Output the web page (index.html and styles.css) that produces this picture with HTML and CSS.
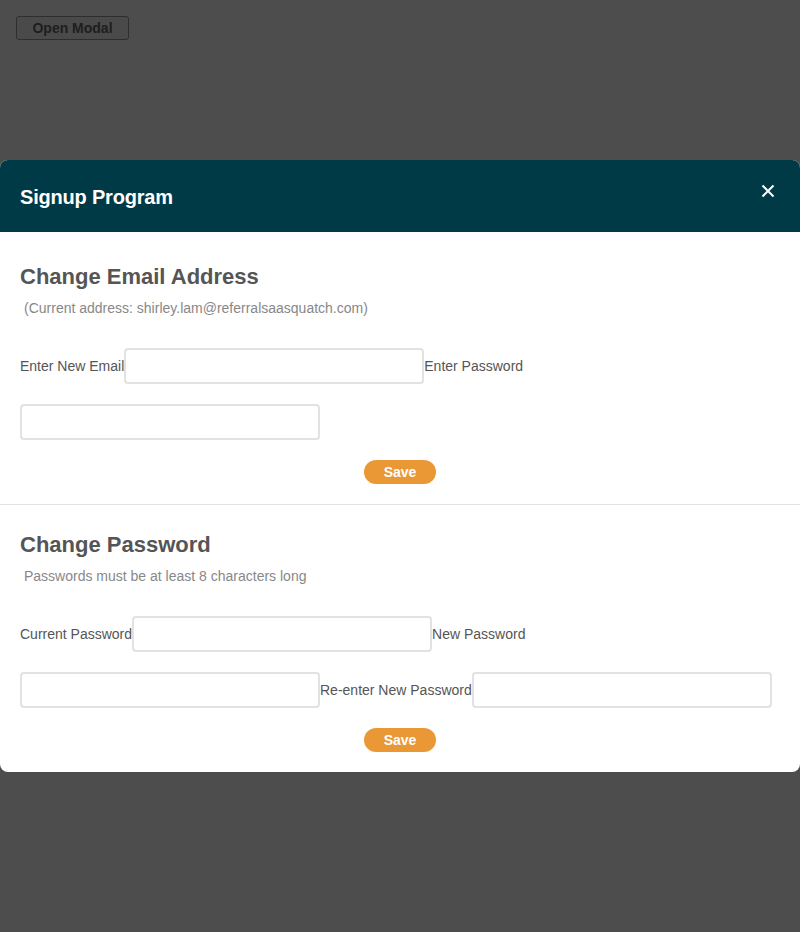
FILE: index.html
```html
<!DOCTYPE html>
<html>
<head>
<meta charset="utf-8">
<link rel="stylesheet" href="styles.css">
</head>
<body>
<div class="page">
  <button class="open-btn">Open Modal</button>
  <div class="modal">
    <div class="modal-header">
      <span class="modal-title">Signup Program</span>
      <svg class="close" width="14" height="14" viewBox="0 0 14 14"><path d="M1.5 1.5 L12.5 12.5 M12.5 1.5 L1.5 12.5" stroke="#fff" stroke-width="2" fill="none"/></svg>
    </div>
    <div class="section first">
      <h2 class="section-title">Change Email Address</h2>
      <p class="section-sub">(Current address: shirley.lam@referralsaasquatch.com)</p>
      <div class="fields">
        <label class="field-label">Enter New Email</label><input class="field-input" type="text">
        <label class="field-label">Enter Password</label><input class="field-input" type="password">
      </div>
      <div class="actions"><button class="save-btn">Save</button></div>
    </div>
    <div class="section second">
      <h2 class="section-title">Change Password</h2>
      <p class="section-sub">Passwords must be at least 8 characters long</p>
      <div class="fields">
        <label class="field-label">Current Password</label><input class="field-input" type="password">
        <label class="field-label">New Password</label><input class="field-input" type="password">
        <label class="field-label">Re-enter New Password</label><input class="field-input" type="password">
      </div>
      <div class="actions"><button class="save-btn">Save</button></div>
    </div>
  </div>
</div>
</body>
</html>
```
FILE: styles.css
```css
html, body {
  margin: 0;
  padding: 0;
  background: #4d4d4d;
  font-family: "Liberation Sans", Arial, sans-serif;
}
.page {
  padding: 16px 0 0 0;
}
.open-btn {
  display: block;
  margin-left: 16px;
  width: 113px;
  height: 24px;
  padding: 0;
  background: #4a4a4a;
  border: 1px solid #2e2e2e;
  border-radius: 3px;
  color: #1e1e1e;
  font-family: "Liberation Sans", Arial, sans-serif;
  font-weight: bold;
  font-size: 14px;
}
.modal {
  margin-top: 120px;
  background: #fff;
  border-radius: 8px;
  overflow: hidden;
}
.modal-header {
  height: 72px;
  background: #003a46;
  display: flex;
  align-items: center;
  justify-content: space-between;
  padding: 0 25px 0 20px;
}
.modal-title {
  color: #fff;
  font-weight: bold;
  font-size: 20px;
  letter-spacing: -0.2px;
  margin-top: 2px;
}
.close {
  margin-top: -10px;
}
.section {
  padding: 32px 20px 20px 20px;
}
.section.first {
  border-bottom: 1px solid #e2e2e2;
}
.section.second {
  padding-top: 27px;
}
.section-title {
  margin: 0;
  font-size: 22px;
  line-height: 26px;
  font-weight: bold;
  color: #555;
}
.section-sub {
  margin: 10px 0 0 4px;
  font-size: 14px;
  line-height: 16px;
  color: #888;
}
.fields {
  margin-top: 32px;
  display: flex;
  flex-wrap: wrap;
  align-items: center;
  row-gap: 20px;
}
.field-label {
  font-size: 14px;
  color: #555;
  white-space: nowrap;
}
.field-input {
  box-sizing: border-box;
  width: 300px;
  height: 36px;
  margin: 0;
  border: 2px solid #e2e2e2;
  border-radius: 4px;
  background: #fff;
  outline: none;
}
.actions {
  margin-top: 20px;
  display: flex;
  justify-content: center;
}
.save-btn {
  width: 72px;
  height: 24px;
  padding: 0;
  border: none;
  border-radius: 12px;
  background: #e99835;
  color: #fff;
  font-family: "Liberation Sans", Arial, sans-serif;
  font-weight: bold;
  font-size: 14px;
}
```
